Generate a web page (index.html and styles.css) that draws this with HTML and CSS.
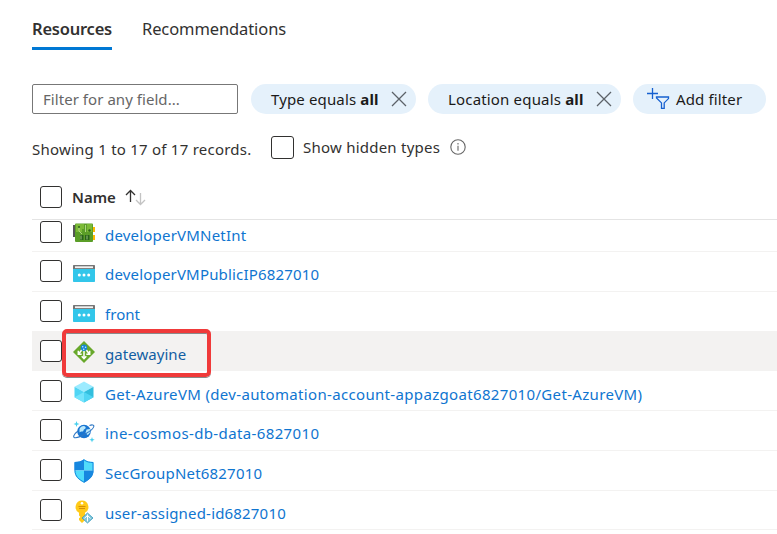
FILE: index.html
```
<!DOCTYPE html>
<html lang="en">
<head>
<meta charset="utf-8">
<title>Resources</title>
<link rel="stylesheet" href="styles.css">
</head>
<body>
<svg width="0" height="0" class="defs">
  <symbol id="close" viewBox="0 0 16 16"><path d="M1 1l14 14M15 1L1 15" fill="none" stroke="#5c6268" stroke-width="1.3"/></symbol>
  <symbol id="ip" viewBox="0 0 22 17"><path d="M0 4h22v12.2a.8.8 0 0 1-.8.8H.8a.8.8 0 0 1-.8-.8z" fill="#32c6ea"/><path d="M0 .7A.7.7 0 0 1 .7 0h20.6a.7.7 0 0 1 .7.7V4H0z" fill="#767676"/><path d="M2 1.3h18v1.8H2z" fill="#f2f2f2"/><g fill="#fff"><circle cx="6.3" cy="10" r="1.5"/><circle cx="11" cy="10" r="1.5"/><circle cx="15.7" cy="10" r="1.5"/></g></symbol>
</svg>
<main class="page">
  <nav class="tabs">
    <a class="tab active">Resources</a>
    <a class="tab">Recommendations</a>
  </nav>
  <section class="filters">
    <div class="field">Filter for any field...</div>
    <div class="pill type"><span>Type equals <b>all</b></span><svg class="x"><use href="#close"/></svg></div>
    <div class="pill location"><span>Location equals <b>all</b></span><svg class="x"><use href="#close"/></svg></div>
    <div class="pill add">
      <svg width="23" height="22" viewBox="0 0 23 22" fill="none" stroke="#1660d0" stroke-width="1.3"><path d="M5.500 0v11M0 5.500h11"/><path d="M9.500 9h12v1.600l-4.300 4.300v5.400h-2.700v-5.400l-5-5z"/></svg>
      <span>Add filter</span>
    </div>
  </section>
  <section class="status">
    <span class="count">Showing 1 to 17 of 17 records.</span>
    <i class="check"></i>
    <span class="hidden-label">Show hidden types</span>
    <svg class="info" viewBox="0 0 16 16" fill="none" stroke="#666" stroke-width="1.1"><circle cx="8" cy="8" r="7.200"/><path d="M8 6.800v5M8 4v1.400"/></svg>
  </section>
  <section class="table">
    <header class="head">
      <i class="check"></i><b>Name</b>
      <svg class="sort" viewBox="0 0 21 17" fill="none" stroke-width="1.300"><path d="M5.500 13V1.500M1 6l4.500-4.500L10 6" stroke="#323130"/><path d="M15.500 4v11.500M11 11l4.500 4.500L20 11" stroke="#c3c3c3"/></svg>
    </header>
    <div class="row first"><i class="check"></i>
      <svg class="icon nic" viewBox="0 0 22 20"><path d="M0 2h2v12H0z" fill="#555"/><path d="M19 4h3v5h-3zM19 12h3v5h-3z" fill="#ffb900"/><rect x="2" y=".5" width="18" height="18.500" rx="1" fill="#5b9e28"/><path d="M3 1h8v5H9v3H3zM14 1h5v8h-5z" fill="#7cba37"/><path d="M7 12h3.500v5H7zM12 12h4.500v5H12z" fill="#28631a"/><path d="M8 12.500v4M14 12.500v4" stroke="#b9d99b" stroke-width=".8"/><path d="M6 4v4l3 3M12.500 2v7" fill="none" stroke="#c5e59b" stroke-width=".8"/><circle cx="6" cy="4" r="1" fill="#2b621a"/><circle cx="16.500" cy="7.500" r="1.200" fill="#2b621a"/></svg>
      <a>developerVMNetInt</a></div>
    <div class="row ls-m"><i class="check"></i><svg class="icon ip"><use href="#ip"/></svg><a>developerVMPublicIP6827010</a></div>
    <div class="row ls-s"><i class="check"></i><svg class="icon ip"><use href="#ip"/></svg><a>front</a></div>
    <div class="row selected ls-s"><i class="check"></i>
      <svg class="icon" viewBox="0 0 22 22"><path d="M11 0l11 11-11 11L0 11z" fill="#68a82b"/><path d="M11 8v9M8.700 15.300l2.300 2.400 2.300-2.400M9.500 8l-3.700 4.700M12.500 8l3.700 4.700M5.300 9.800v3.400h3.400M16.700 9.800v3.400h-3.400" fill="none" stroke="#fff" stroke-width="1.500"/><circle cx="11" cy="6.800" r="3.200" fill="#1685d5"/><circle cx="9.700" cy="5.700" r=".8" fill="#c3efff"/><circle cx="12.600" cy="6.200" r=".8" fill="#c3efff"/><circle cx="10.700" cy="8.300" r=".8" fill="#c3efff"/></svg>
      <a>gatewayine</a><span class="marker"></span></div>
    <div class="row ls-l"><i class="check"></i>
      <svg class="icon" viewBox="0 0 22 22"><path d="M11 .5l9.500 5.300L11 11 1.500 5.800z" fill="#9cebff"/><path d="M1.500 5.800L11 11v10.500l-9.500-5.300z" fill="#50d5f4"/><path d="M20.500 5.800L11 11v10.500l9.500-5.300z" fill="#32bedd"/><path d="M1.500 16.200L11 11v10.500z" fill="#75e4fc"/><path d="M20.500 16.200L11 11v10.500z" fill="#50d5f4"/></svg>
      <a>Get-AzureVM (dev-automation-account-appazgoat6827010/Get-AzureVM)</a></div>
    <div class="row ls-xl"><i class="check"></i>
      <svg class="icon" viewBox="0 0 22 22"><circle cx="11" cy="10.500" r="6.800" fill="#1975d1"/><path d="M6.500 8c1-3 5-4 6-2s-2 2-2 3.500S8 10 6.500 11.500zM13.500 8.500l3.500-.5c.8 3-.5 5-2.500 6l-2-2z" fill="#b9e8fb"/><path d="M5 10C-.5 14 0 17 2.500 16.800 7 16.500 20 9.500 20.800 5.500 21.200 3.500 18.500 3.700 16.500 4.500" fill="none" stroke="#2e77c4" stroke-width="1.100"/><path d="M3.500 0l.8 2.200 2.200.8-2.200.8-.8 2.200-.8-2.200L.5 3l2.200-.8zM19 16l.7 2 2 .7-2 .7-.7 2-.7-2-2-.7 2-.7z" fill="#46cfed"/></svg>
      <a>ine-cosmos-db-data-6827010</a></div>
    <div class="row"><i class="check"></i>
      <svg class="icon shield" viewBox="0 0 20 24"><path d="M10 .3C7.500 2.500 4 3 .5 3v8.500H10z" fill="#1787df"/><path d="M10 .3c2.500 2.200 6 2.700 9.500 2.700v8.500H10z" fill="#50dcfb"/><path d="M.5 11.500C.5 18 5 21 10 23.700V11.500z" fill="#50dcfb"/><path d="M19.500 11.500C19.500 18 15 21 10 23.700V11.500z" fill="#1787df"/><path d="M10 .8C7.500 3 4 3.500 1 3.500v8C1 17.500 5 20.500 10 23.200c5-2.700 9-5.700 9-11.700v-8c-3 0-6.500-.5-9-2.700z" fill="none" stroke="#1787df"/></svg>
      <a>SecGroupNet6827010</a></div>
    <div class="row ls-m"><i class="check"></i>
      <svg class="icon key" viewBox="0 0 22 24"><path d="M9 .5a6.500 6.500 0 0 1 3 12.200V20l-3 3-3-3v-1.800l1.500-1.300L6 15.500v-2.800A6.500 6.500 0 0 1 9 .5z" fill="#ffca18"/><path d="M5.500 6.500h7M6 8.500h6" stroke="#d78d09"/><circle cx="9" cy="3.200" r="1.300" fill="#fff"/><path d="M14.500 13l5.500 5-5.500 5L9 18z" fill="#82c6d9" stroke="#3499bd" stroke-width=".8"/><path d="M14.500 14.500v7M11.500 18.300l3-2.800 3 2.800" fill="none" stroke="#fff"/></svg>
      <a>user-assigned-id6827010</a></div>
  </section>
</main>
</body>
</html>
```
FILE: styles.css
```
* { box-sizing: border-box; }
body { margin: 0; background: #fff; color: #323130; font: 15px/20px "Noto Sans", "Open Sans", sans-serif; overflow: hidden; }
.defs { position: absolute; }
.page { padding: 16px 0 0 32px; width: 777px; }
span, a, b { white-space: nowrap; }
.tabs { display: flex; gap: 30px; height: 34px; }
.tab { font-size: 16.5px; line-height: 25px; height: 34px; letter-spacing: -.1px; }
.tab.active { width: 80px; font-weight: 600; border-bottom: 3px solid #0078d4; letter-spacing: -.22px; }
.filters { display: flex; height: 30px; margin-top: 34px; }
.field { width: 206px; border: 1px solid #777; border-radius: 2px; padding: 4px 10px; color: #666; letter-spacing: .05px; }
.pill { height: 30px; border-radius: 15px; background: #e5f1fb; color: #1b1a19; display: flex; align-items: center; letter-spacing: .14px; }
.type { width: 165px; margin-left: 13px; padding: 0 9px 0 20px; justify-content: space-between; }
.location { width: 193px; margin-left: 12px; padding: 0 9px 0 20px; justify-content: space-between; letter-spacing: .17px; }
.add { width: 133px; margin-left: 12px; padding-left: 14px; gap: 6px; }
.x { width: 16px; height: 16px; }
.status { display: flex; height: 24px; margin-top: 21px; align-items: center; letter-spacing: .235px; }
.count { width: 239px; padding-top: 4px; }
.check { flex: none; width: 22px; height: 22px; border: 1px solid #323130; border-radius: 3px; background: #fff; }
.status .check { width: 23px; height: 23px; }
.hidden-label { margin-left: 9px; width: 147px; }
.info { width: 16px; height: 16px; }
.head { height: 45px; margin-top: 16px; padding-left: 8px; display: flex; align-items: center; border-bottom: 1px solid #e4e4e4; }
.head b { margin-left: 10px; width: 53px; font-weight: 600; }
.sort { width: 21px; height: 17px; }
.row { position: relative; display: flex; align-items: center; height: 39.75px; padding-left: 8px; border-bottom: 1px solid #f3f2f1; color: #0f75d0; letter-spacing: .2px; }
.row.first { height: 32px; padding-bottom: 7px; }
.icon { flex: none; width: 22px; height: 22px; margin: 3px 10px 0 11px; }
.icon.ip { height: 17px; margin-top: 4px; }
.icon.nic { height: 20px; margin-top: 2px; }
.icon.shield { width: 20px; height: 24px; margin: 2px 11px 0 12px; }
.icon.key { height: 24px; margin-top: 4px; }
.row a { padding-top: 6px; }
.ls-s { letter-spacing: .05px; }
.ls-m { letter-spacing: .18px; }
.ls-l { letter-spacing: .335px; }
.ls-xl { letter-spacing: .377px; }
.row.selected { background: #f3f2f1; color: #115ea3; }
.marker { position: absolute; left: 30px; top: -3px; width: 149px; height: 48px; border: 4px solid #f03a3a; border-radius: 5px; box-shadow: inset 0 1px 0 #8a8a8a, 0 1px 0 #8a8a8a; }
```
